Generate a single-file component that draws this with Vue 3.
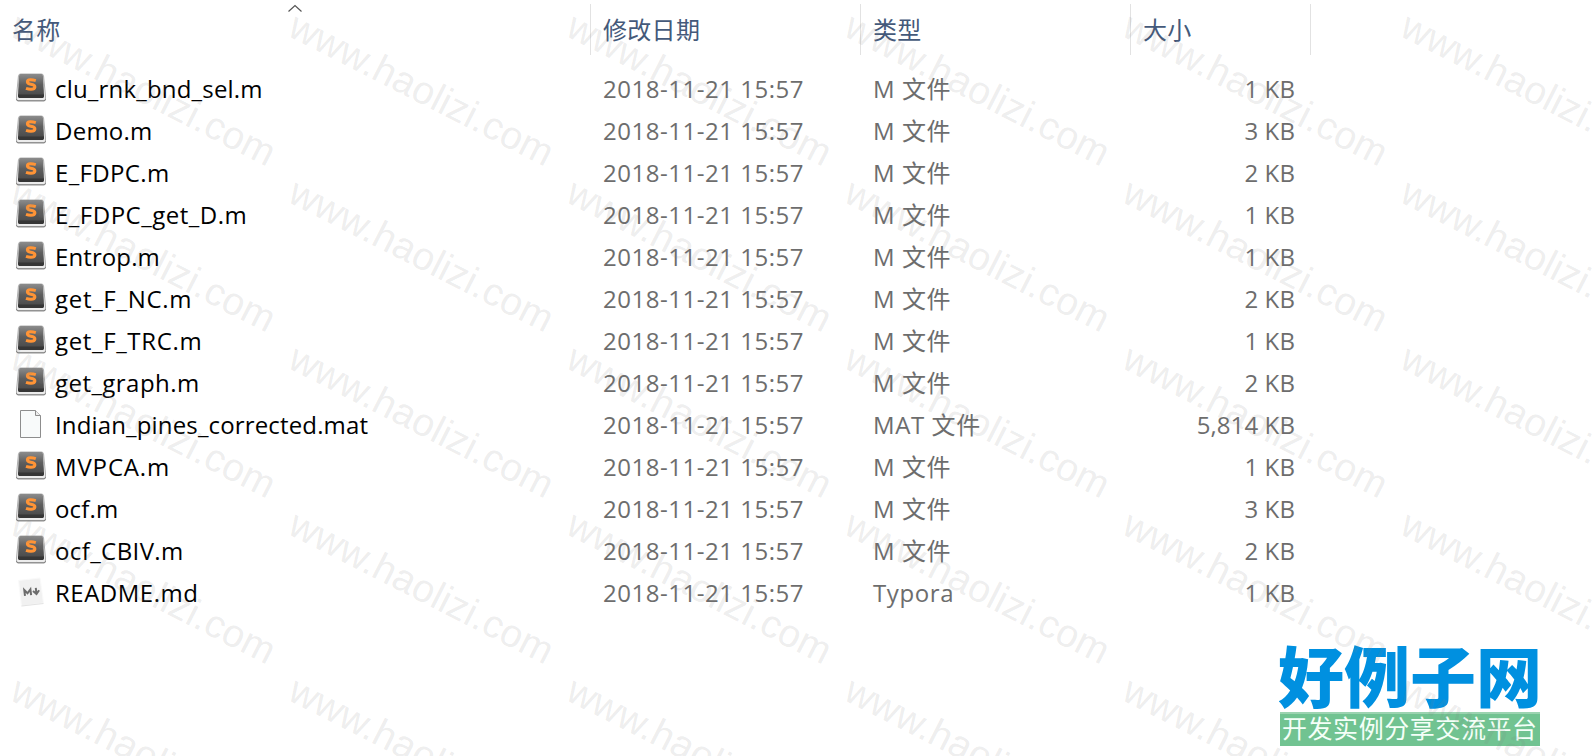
<template>
  <div class="explorer">
    <div class="header">
      <div class="head name">
        名称
        <svg class="sort" width="16" height="9" viewBox="0 0 16 9"><path d="M1.5 7.500 L8 1.5 L14.5 7.500" fill="none" stroke="#555" stroke-width="1.2" /></svg>
      </div>
      <div class="head date">修改日期</div>
      <div class="head type">类型</div>
      <div class="head size">大小</div>
    </div>

    <div class="rows">
      <div v-for="file in files" :key="file.name" class="row">
        <div class="cell name">
          <svg v-if="file.icon === 'sublime'" class="icon" width="32" height="32" viewBox="0 0 32 32">
            <path d="M3.5 2.5 Q4 1 5.500 1 H26.500 Q28 1 28.500 2.500 L30.500 23 V26 Q30.500 28 29 28 H3 Q1.500 28 1.500 26 V23 Z" fill="#ececec" stroke="#b0b0b0" stroke-width="1" />
            <path d="M1.500 26 Q1.600 27.700 3 27.700 H29 Q30.400 27.700 30.500 26" fill="none" stroke="#858585" stroke-width="1" />
            <path d="M5.500 1 H26.500 Q27.800 1 28 3 L29 22 Q29 24.500 27.500 24.500 H4.500 Q3 24.500 3 22 L4 3 Q4.200 1 5.500 1 Z" fill="url(#keycap)" />
            <path d="M3 21.500 H29 Q29.200 25 27.500 25 H4.500 Q2.800 25 3 21.500 Z" fill="#363636" />
            <path d="M20.800 7.600 Q18 6.700 15.300 6.800 Q12.300 7 12.400 9 Q12.600 10.700 15.700 11.200 Q20 11.800 19.900 14 Q19.600 16.200 16 16.200 Q13.500 16.200 11 15.300" fill="none" stroke="#ff9436" stroke-width="3" />
          </svg>
          <svg v-else-if="file.icon === 'blank'" class="icon" width="32" height="32" viewBox="0 0 32 32">
            <path d="M5.500 1.500 H20.500 L25.500 6.500 V28.500 H5.500 Z" fill="#f8fafa" stroke="#8d8d8d" />
            <path d="M20.500 1.500 V6.500 H25.500" fill="#eee" stroke="#8d8d8d" />
          </svg>
          <svg v-else class="icon" width="32" height="32" viewBox="0 0 32 32">
            <path d="M3.500 3.500 L25 1 L28.500 26 L6.500 29 Z" fill="#f1f1f1" stroke="#fafafa" />
            <path d="M6.500 29 L28.500 26.500" stroke="#e3e3e3" />
            <path d="M10 18.800 L9.300 13 L12.500 16.300 L15.400 12.300 L16.100 18.200" fill="none" stroke="#6c6c6c" stroke-width="2" />
            <path d="M20.800 10.800 L21.400 16.500 M18 14 L21.500 17 L24.100 13.300" fill="none" stroke="#6c6c6c" stroke-width="2" />
          </svg>
          <span class="label" :style="{ letterSpacing: file.spacing + 'px' }">{{ file.name }}</span>
        </div>
        <div class="cell date">2018-11-21 15:57</div>
        <div class="cell type">{{ file.type }}</div>
        <div class="cell size">{{ file.size }} KB</div>
      </div>
    </div>

    <svg class="logo" width="264" height="110" viewBox="0 0 264 110">
      <text class="logo-title" x="-1" y="62" textLength="264" lengthAdjust="spacingAndGlyphs">好例子网</text>
      <rect x="1" y="72" width="260" height="34" fill="#71c391" />
      <rect x="1" y="72" width="260" height="2" fill="#9bd3b0" />
      <text class="logo-sub" x="3" y="98" textLength="255">开发实例分享交流平台</text>
    </svg>

    <svg class="watermark" width="1594" height="756">
      <defs>
        <linearGradient id="keycap" x1="0" y1="0" x2="0" y2="1">
          <stop offset="0" stop-color="#8c8c8c" />
          <stop offset="0.45" stop-color="#5e5e5e" />
          <stop offset="1" stop-color="#474747" />
        </linearGradient>
      </defs>
      <g v-for="mark in marks" :key="mark.id" :transform="`translate(${mark.x} ${mark.y}) rotate(27)`">
        <text textLength="291">www.haolizi.com</text>
      </g>
    </svg>
  </div>
</template>

<script setup>
const files = [
  { name: 'clu_rnk_bnd_sel.m', type: 'M 文件', size: '1', icon: 'sublime', spacing: 0.19 },
  { name: 'Demo.m', type: 'M 文件', size: '3', icon: 'sublime', spacing: 0.25 },
  { name: 'E_FDPC.m', type: 'M 文件', size: '2', icon: 'sublime', spacing: 0.35 },
  { name: 'E_FDPC_get_D.m', type: 'M 文件', size: '1', icon: 'sublime', spacing: 0.5 },
  { name: 'Entrop.m', type: 'M 文件', size: '1', icon: 'sublime', spacing: 0.1 },
  { name: 'get_F_NC.m', type: 'M 文件', size: '2', icon: 'sublime', spacing: 0.7 },
  { name: 'get_F_TRC.m', type: 'M 文件', size: '1', icon: 'sublime', spacing: 0.65 },
  { name: 'get_graph.m', type: 'M 文件', size: '2', icon: 'sublime', spacing: 0.45 },
  { name: 'Indian_pines_corrected.mat', type: 'MAT 文件', size: '5,814', icon: 'blank', spacing: 0.15 },
  { name: 'MVPCA.m', type: 'M 文件', size: '1', icon: 'sublime', spacing: 0.85 },
  { name: 'ocf.m', type: 'M 文件', size: '3', icon: 'sublime', spacing: 0.15 },
  { name: 'ocf_CBIV.m', type: 'M 文件', size: '2', icon: 'sublime', spacing: 0.4 },
  { name: 'README.md', type: 'Typora', size: '1', icon: 'markdown', spacing: 0.5 },
];

// the watermark repeats on a 278 x 166 grid
const marks = [];
for (let row = 0; row < 5; row++) {
  for (let col = 0; col < 6; col++) {
    marks.push({ id: `${row}-${col}`, x: 8 + col * 278, y: 35 + row * 166 });
  }
}
</script>

<style>
body {
  margin: 0;
  background: #fff;
}
</style>

<style scoped>
.explorer {
  position: relative;
  width: 1594px;
  height: 756px;
  overflow: hidden;
  background: #fff;
  font-family: "Open Sans", "Noto Sans CJK SC", sans-serif;
  font-size: 24px;
}

.header,
.row {
  display: grid;
  grid-template-columns: 591px 270px 270px 180px;
}

.header {
  padding-top: 4px;
  height: 64px;
}

.head {
  position: relative;
  box-sizing: border-box;
  height: 51px;
  padding-left: 12px;
  border-right: 1px solid #e2e2e2;
  color: #44597a;
  line-height: 52px;
  letter-spacing: 0.3px;
}

.sort {
  position: absolute;
  left: 287px;
  top: 0;
}

.row {
  height: 42px;
  line-height: 42px;
}

.cell {
  box-sizing: border-box;
  padding-left: 12px;
  color: #6d6d6d;
  white-space: nowrap;
}

.cell.name {
  display: flex;
  align-items: center;
  padding-left: 15px;
  color: #000;
}

.icon {
  flex: none;
  margin-right: 8px;
  margin-top: -1px;
}

.cell.date {
  letter-spacing: 0.52px;
}

.cell.type {
  letter-spacing: 0.6px;
}

.cell.size {
  padding-right: 16px;
  text-align: right;
  letter-spacing: 0.1px;
}

.logo {
  position: absolute;
  left: 1279px;
  top: 640px;
}

.logo-title {
  font-family: "Noto Sans CJK SC", sans-serif;
  font-size: 66px;
  font-weight: 900;
  fill: #0090e0;
}

.logo-sub {
  font-family: "Noto Sans CJK SC", sans-serif;
  font-size: 25px;
  fill: #f4fff8;
}

.watermark {
  position: absolute;
  left: 0;
  top: 0;
  font-family: "Liberation Sans", Arial, sans-serif;
  font-size: 39px;
  fill: rgba(128, 128, 128, 0.15);
  pointer-events: none;
}
</style>
